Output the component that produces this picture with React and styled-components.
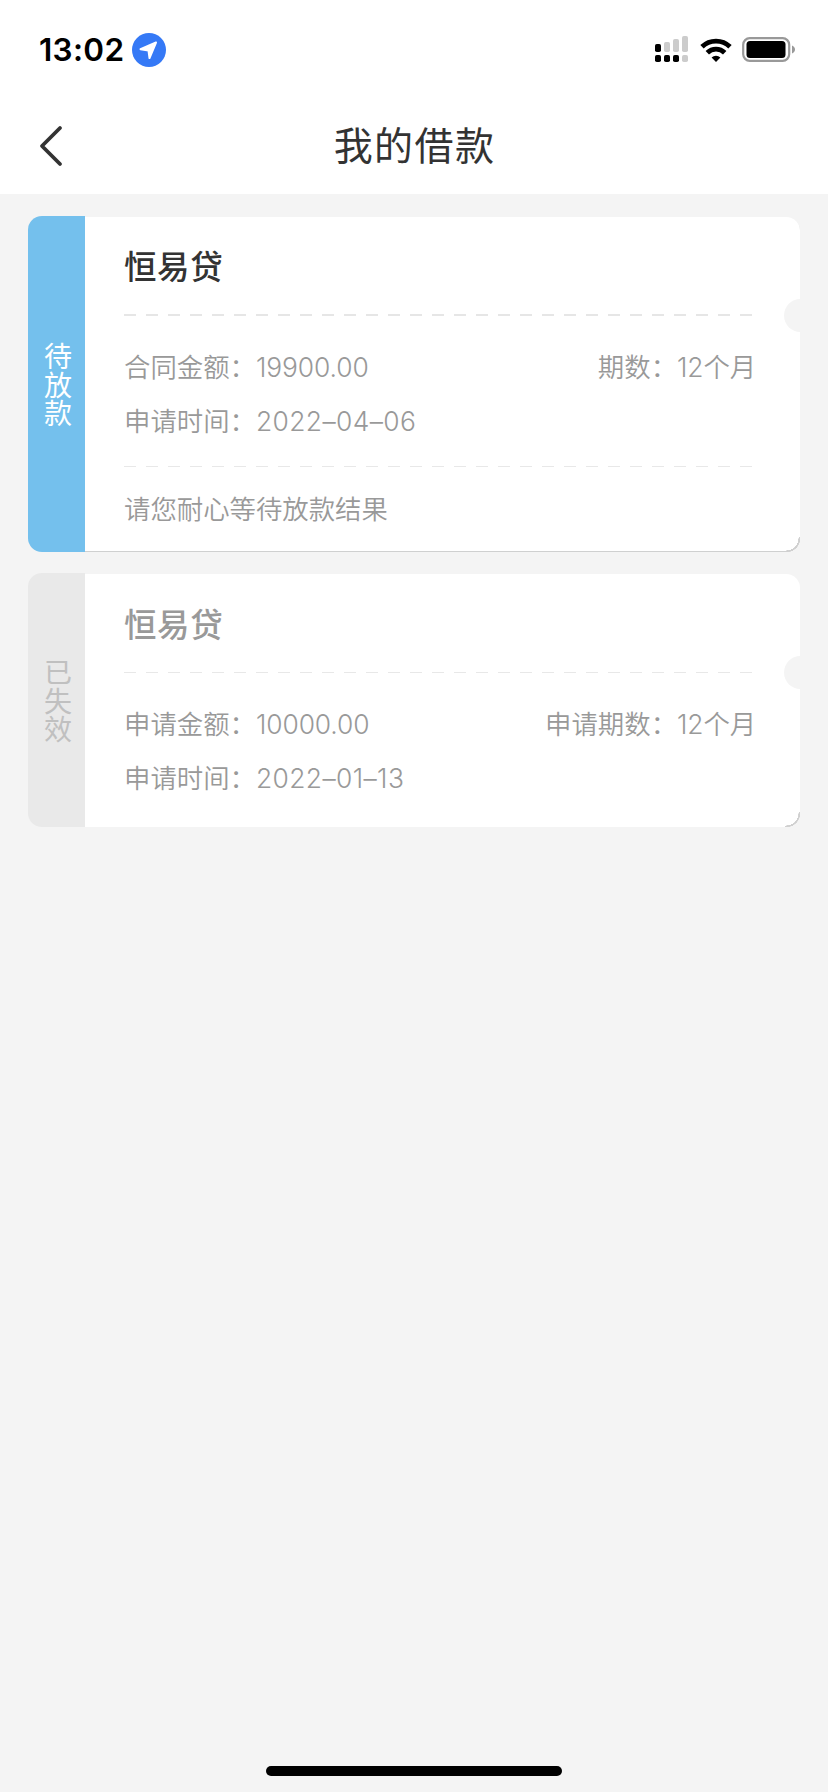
import React from "react"
import styled, { createGlobalStyle } from "styled-components"

const GlobalStyle = createGlobalStyle`
  * {
    box-sizing: border-box;
  }

  body {
    margin: 0;
    background: #f4f4f4;
    font-family: Inter, 'Noto Sans CJK SC', sans-serif;
  }
`

const Screen = styled.div`
  display: flex;
  flex-direction: column;
  width: 828px;
  height: 1792px;
  background: #f4f4f4;
  overflow: hidden;
`

const StatusBar = styled.div`
  display: flex;
  align-items: center;
  justify-content: space-between;
  height: 98px;
  padding: 2px 32px 0 39px;
  background: #fff;
`

const StatusGroup = styled.div`
  display: flex;
  align-items: center;
`

const Time = styled.span`
  width: 93px;
  font-size: 31.5px;
  font-weight: 600;
  line-height: 40px;
  letter-spacing: 0.3px;
  white-space: nowrap;
  color: #000;
`

const NavBar = styled.header`
  display: grid;
  grid-template-columns: 100px 1fr 100px;
  align-items: center;
  height: 96px;
  background: #fff;
`

const BackButton = styled.button`
  display: flex;
  padding: 0 0 0 38px;
  border: 0;
  background: none;
`

const NavTitle = styled.h1`
  margin: 0;
  padding: 0 0 6px 1px;
  font-family: 'Noto Sans CJK SC', sans-serif;
  font-size: 39px;
  font-weight: 400;
  line-height: 90px;
  letter-spacing: 1.4px;
  text-align: center;
  color: #333;
`

const LoanList = styled.main`
  display: flex;
  flex-direction: column;
  flex: 1;
  gap: 21px;
  padding: 22px 28px 0;
`

const Card = styled.article`
  display: flex;
  border-radius: 14px;
`

const CardTab = styled.div`
  display: flex;
  align-items: center;
  justify-content: center;
  width: 57px;
  padding-left: 3px;
  border-radius: 14px 0 0 14px;
  background: ${props => props.$expired ? '#e9e9e9' : '#74c0ed'};
`

const TabLabel = styled.span`
  width: 28px;
  font-family: 'Noto Sans CJK SC', sans-serif;
  font-size: 28px;
  font-weight: 400;
  line-height: 28.7px;
  word-break: break-all;
  color: ${props => props.$expired ? '#c0c0c0' : '#fff'};
`

const CardBody = styled.div`
  position: relative;
  flex: 1;
  height: ${props => props.$expired ? '253px' : '335px'};
  margin-top: 1px;
  padding: 0 44px 0 39px;
  border-radius: 0 14px 14px 0;
  background: #fff;
  box-shadow: ${props => props.$expired ? 'none' : 'inset 0 -1px 0 #cfd0d0'};
  overflow: hidden;

  ::after {
    content: '';
    position: absolute;
    right: 0;
    bottom: 0;
    width: 14px;
    height: 14px;
    border: solid #d0d0d0;
    border-width: 0 1px 1px 0;
    border-bottom-right-radius: 14px;
  }
`

const Notch = styled.span`
  position: absolute;
  top: 82px;
  right: -17px;
  width: 33px;
  height: 33px;
  border-radius: 50%;
  background: #f4f4f4;
`

const LoanName = styled.h2`
  margin: 0;
  font-family: 'Noto Sans CJK SC', sans-serif;
  font-size: 32.5px;
  font-weight: 500;
  letter-spacing: 0.6px;
  line-height: ${props => props.$expired ? '97px' : '96px'};
  padding-bottom: 1px;
  color: ${props => props.$expired ? '#999' : '#333'};
`

const Dashes = styled.div`
  height: ${props => props.$thin ? '1px' : '2px'};
  background: repeating-linear-gradient(
    to right,
    ${props => props.$thin ? '#e8e8e8' : '#e6e6e6'} 0 12px,
    transparent 12px 22px
  );
`

const Details = styled.div`
  padding: 24px 0 18px;
`

const DetailRow = styled.div`
  display: flex;
  justify-content: space-between;
  font-size: 26.4px;
  line-height: 54px;
  color: #999;
`

const Field = styled.div`
  display: flex;
`

const Label = styled.span`
  font-family: 'Noto Sans CJK SC', sans-serif;
  font-weight: 350;
  line-height: 52px;
`

const Value = styled.span`
  font-weight: 350;
  letter-spacing: ${props => props.$date ? '0.4px' : '-0.1px'};
`

const Note = styled.p`
  margin: 0;
  font-family: 'Noto Sans CJK SC', sans-serif;
  font-size: 26.4px;
  font-weight: 350;
  line-height: 82px;
  color: #999;
`

const HomeIndicator = styled.div`
  align-self: center;
  width: 296px;
  height: 10px;
  margin-bottom: 16px;
  border-radius: 5px;
  background: #000;
`

const loans = [
  {
    status: '待放款',
    name: '恒易贷',
    amountLabel: '合同金额：',
    amount: '19900.00',
    termLabel: '期数：',
    term: '12个月',
    date: '2022–04–06',
    note: '请您耐心等待放款结果',
  },
  {
    status: '已失效',
    name: '恒易贷',
    amountLabel: '申请金额：',
    amount: '10000.00',
    termLabel: '申请期数：',
    term: '12个月',
    date: '2022–01–13',
    expired: true,
  },
]

const LocationIcon = () => (
  <svg width="34" height="34" viewBox="0 0 34 34">
    <circle cx="17" cy="17" r="17" fill="#3579f6" />
    <path d="M24 9.5L8.5 16.2L16.5 17.5L17.5 25Z" fill="#fff" stroke="#fff" strokeWidth="2" strokeLinejoin="round" />
  </svg>
)

const SignalIcon = () => (
  <svg width="34" height="28" viewBox="0 0 34 28">
    <g fill="#000">
      <rect x="0" y="8" width="6" height="8" rx="1.8" />
      <rect x="0" y="19" width="6" height="7" rx="1.8" />
      <rect x="9" y="19" width="6" height="7" rx="1.8" />
      <rect x="18" y="19" width="6" height="7" rx="1.8" />
    </g>
    <g fill="#cccccc">
      <rect x="9" y="6" width="6" height="10" rx="1.8" />
      <rect x="18" y="3" width="6" height="13" rx="1.8" />
      <rect x="27" y="0" width="6" height="16" rx="1.8" />
      <rect x="27" y="19" width="6" height="7" rx="1.8" />
    </g>
  </svg>
)

const WifiIcon = () => (
  <svg width="32" height="25" viewBox="0 0 32 25">
    <g fill="none" stroke="#000" strokeWidth="4.8">
      <path d="M2 8.8A20 20 0 0 1 30 8.8" />
      <path d="M7.3 14.8A12.3 12.3 0 0 1 24.7 14.8" />
    </g>
    <path d="M16 24L11.6 19.6A6.2 6.2 0 0 1 20.4 19.6Z" />
  </svg>
)

const BatteryIcon = () => (
  <svg width="54" height="26" viewBox="0 0 54 26">
    <rect x="1.2" y="1.2" width="46" height="22.6" rx="6.5" fill="none" stroke="#999" strokeWidth="2.2" />
    <rect x="4.5" y="4" width="39" height="17" rx="3.5" />
    <path d="M50 8.5C54 10 54 15 50 16.5Z" fill="#999" />
  </svg>
)

const StatusIcons = styled(StatusGroup)`
  width: 141px;
  justify-content: space-between;
`

const LoanCard = ({ loan }) => {
  return (
    <Card>
      <CardTab $expired={loan.expired}>
        <TabLabel $expired={loan.expired}>{loan.status}</TabLabel>
      </CardTab>
      <CardBody $expired={loan.expired}>
        <Notch />
        <LoanName $expired={loan.expired}>{loan.name}</LoanName>
        <Dashes $thin={loan.expired} />
        <Details>
          <DetailRow>
            <Field>
              <Label>{loan.amountLabel}</Label>
              <Value>{loan.amount}</Value>
            </Field>
            <Field>
              <Label>{loan.termLabel}</Label>
              <Value>{loan.term}</Value>
            </Field>
          </DetailRow>
          <DetailRow>
            <Field>
              <Label>申请时间：</Label>
              <Value $date>{loan.date}</Value>
            </Field>
          </DetailRow>
        </Details>
        {loan.note && <Dashes $thin />}
        {loan.note && <Note>{loan.note}</Note>}
      </CardBody>
    </Card>
  )
}

const App = () => {
  return (
    <Screen>
      <GlobalStyle />
      <StatusBar>
        <StatusGroup>
          <Time>13:02</Time>
          <LocationIcon />
        </StatusGroup>
        <StatusIcons>
          <SignalIcon />
          <WifiIcon />
          <BatteryIcon />
        </StatusIcons>
      </StatusBar>
      <NavBar>
        <BackButton aria-label="返回">
          <svg width="26" height="42" viewBox="0 0 26 42">
            <path d="M22 3L4 21L22 39" fill="none" stroke="#333" strokeWidth="3.8" strokeLinecap="round" strokeLinejoin="round" />
          </svg>
        </BackButton>
        <NavTitle>我的借款</NavTitle>
      </NavBar>
      <LoanList>
        {loans.map(loan => <LoanCard key={loan.status} loan={loan} />)}
      </LoanList>
      <HomeIndicator />
    </Screen>
  )
}

export default App
